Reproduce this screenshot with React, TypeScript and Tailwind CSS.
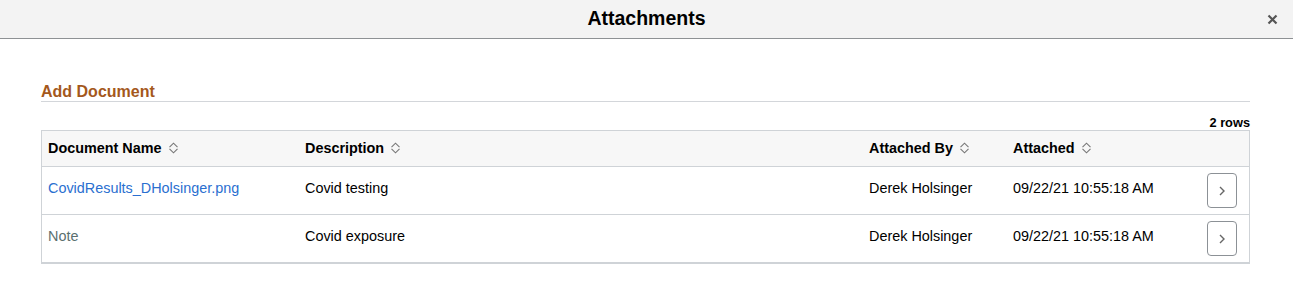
import React from "react";

function SortIcon() {
  return (
    <svg width="11" height="12" viewBox="0 0 11 12" className="ml-[6px] shrink-0">
      <path d="M1.5 5.2 L5.5 1.2 L9.5 5.2" fill="none" stroke="#777" strokeWidth="1.1" />
      <path d="M1.5 6.8 L5.5 10.8 L9.5 6.8" fill="none" stroke="#777" strokeWidth="1.1" />
    </svg>
  );
}

function RowButton() {
  return (
    <div className="w-[30px] h-[35px] border border-[#8c9196] rounded-[4px] bg-white flex items-center justify-center">
      <svg width="8" height="12" viewBox="0 0 8 12">
        <path d="M2 2 L6 6 L2 10" fill="none" stroke="#666" strokeWidth="1.4" />
      </svg>
    </div>
  );
}

const rows = [
  { name: "CovidResults_DHolsinger.png", link: true, desc: "Covid testing", by: "Derek Holsinger", at: "09/22/21 10:55:18 AM" },
  { name: "Note", link: false, desc: "Covid exposure", by: "Derek Holsinger", at: "09/22/21 10:55:18 AM" },
];

export default function App() {
  return (
    <div className="w-[1293px] h-[300px] bg-white text-black" style={{ fontFamily: '"Liberation Sans", Arial, sans-serif' }}>
      <div className="h-[39px] bg-[#f3f3f3] border-b border-[#8e9194] flex items-center justify-center relative">
        <div className="text-[19.5px] font-bold text-black">Attachments</div>
        <div className="absolute right-[15px] top-[14px]">
          <svg width="11" height="11" viewBox="0 0 11 11">
            <path d="M1.5 1.5 L9.5 9.5 M9.5 1.5 L1.5 9.5" stroke="#555" strokeWidth="2.2" />
          </svg>
        </div>
      </div>
      <div className="pl-[41px] pr-[43px] pt-[44px]">
        <div className="text-[16px] leading-[18px] font-bold text-[#a4581c] border-b border-[#d3d6da]">Add Document</div>
        <div className="mt-[13px] text-[12.8px] leading-[15px] font-bold text-right">2 rows</div>
        <div className="border-l border-r border-t border-[#cfd3d7] text-[14.4px]">
          <div className="h-[36px] bg-[#f7f7f7] border-b border-[#cfd3d7] flex items-center font-bold">
            <div className="w-[257px] pl-[6px] flex items-center">Document Name<SortIcon /></div>
            <div className="w-[564px] pl-[6px] flex items-center">Description<SortIcon /></div>
            <div className="w-[144px] pl-[6px] flex items-center">Attached By<SortIcon /></div>
            <div className="flex-1 pl-[6px] flex items-center">Attached<SortIcon /></div>
          </div>
          {rows.map((r, i) => (
            <div
              key={i}
              className={
                i === rows.length - 1
                  ? "h-[49px] border-b-2 border-[#cfd3d7] flex items-center"
                  : "h-[48px] border-b border-[#cfd3d7] flex items-center"
              }
            >
              <div className={r.link ? "w-[257px] pl-[6px] mb-1 text-[#2a6fd0]" : "w-[257px] pl-[6px] mb-1 text-[#5b6f6f]"}>{r.name}</div>
              <div className="w-[564px] pl-[6px] mb-1">{r.desc}</div>
              <div className="w-[144px] pl-[6px] mb-1">{r.by}</div>
              <div className="flex-1 pl-[6px] mb-1">{r.at}</div>
              <div className="pr-[12px]">
                <RowButton />
              </div>
            </div>
          ))}
        </div>
      </div>
    </div>
  );
}
